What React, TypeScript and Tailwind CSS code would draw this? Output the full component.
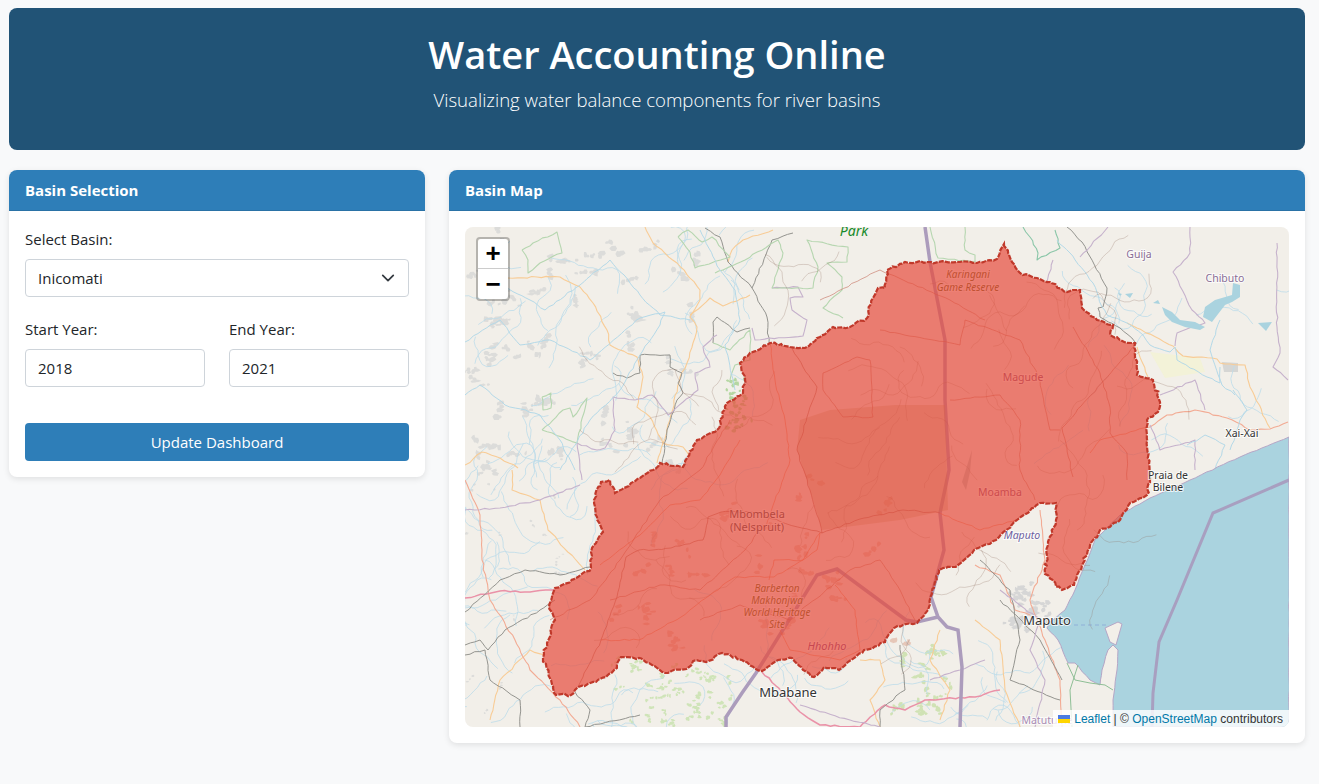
import React from "react";

type P = [number, number];

function rng(seed: number) {
  let a = seed >>> 0;
  return () => {
    a = (a + 0x6d2b79f5) >>> 0;
    let t = a;
    t = Math.imul(t ^ (t >>> 15), t | 1);
    t ^= t + Math.imul(t ^ (t >>> 7), t | 61);
    return ((t ^ (t >>> 14)) >>> 0) / 4294967296;
  };
}

function wig(pts: P[], amp: number, step: number, seed: number, close = false) {
  const r = rng(seed);
  const list = close ? [...pts, pts[0]] : pts;
  let d = `M${list[0][0]} ${list[0][1]}`;
  for (let i = 1; i < list.length; i++) {
    const [x0, y0] = list[i - 1];
    const [x1, y1] = list[i];
    const n = Math.max(1, Math.round(Math.hypot(x1 - x0, y1 - y0) / step));
    for (let k = 1; k <= n; k++) {
      const t = k / n;
      const j = k === n ? 0 : 1;
      const x = x0 + (x1 - x0) * t + j * (r() - 0.5) * 2 * amp;
      const y = y0 + (y1 - y0) * t + j * (r() - 0.5) * 2 * amp;
      d += `L${x.toFixed(1)} ${y.toFixed(1)}`;
    }
  }
  return d + (close ? "Z" : "");
}

const basin: P[] = [
  [1004, 244], [1012, 262], [1020, 273], [1037, 278], [1050, 282], [1067, 292], [1080, 290], [1082, 308],
  [1097, 320], [1113, 325], [1110, 335], [1120, 340], [1135, 343], [1137, 375], [1153, 380], [1160, 402],
  [1158, 412], [1147, 420], [1147, 447], [1150, 478], [1147, 495], [1130, 503], [1118, 522], [1100, 530],
  [1090, 545], [1082, 565], [1074, 585], [1062, 590], [1045, 574], [1048, 545], [1056, 520], [1056, 503],
  [1040, 503], [1017, 520], [996, 540], [974, 550], [958, 565], [939, 570], [928, 610], [917, 623],
  [903, 625], [894, 628], [885, 642], [864, 650], [851, 660], [839, 670], [824, 667], [814, 677],
  [803, 670], [792, 658], [778, 660], [762, 671], [742, 660], [722, 653], [706, 662], [696, 660],
  [689, 667], [665, 673], [649, 663], [639, 658], [621, 657], [614, 670], [596, 682], [578, 687],
  [571, 695], [556, 695], [551, 680], [543, 658], [547, 643], [555, 620], [549, 607], [555, 588],
  [578, 577], [591, 568], [592, 548], [603, 532], [597, 517], [594, 500], [601, 482], [610, 480],
  [615, 493], [631, 483], [653, 470], [660, 463], [683, 467], [697, 440], [717, 430], [727, 403],
  [743, 393], [745, 380], [740, 363], [750, 353], [770, 343], [790, 347], [805, 348], [820, 337],
  [833, 327], [850, 327], [867, 318], [873, 298], [878, 288], [885, 288], [887, 270], [905, 262],
  [927, 262], [960, 262], [977, 263], [997, 259],
];

const sea: P[] = [
  [1289, 437], [1240, 457], [1190, 480], [1150, 498], [1120, 515], [1095, 540], [1085, 565], [1075, 590],
  [1065, 610], [1050, 622], [1047, 628], [1058, 640], [1068, 663], [1075, 663], [1090, 680], [1100, 685],
  [1102, 670], [1108, 650], [1113, 645], [1118, 650], [1117, 670], [1113, 700], [1113, 727], [1289, 727],
];

type L = { c: string; w: number; p: P[] };
const O = "#f8cc96";
const B = "#b4d9e8";
const V = "#c6b2cc";
const G = "#b6d6b0";
const R = "#94948f";
const H = "#f2ab94";
const K = "#ea92a8";

const lines: L[] = [
  { c: O, w: 1.1, p: [[645, 227], [653, 243], [677, 263], [700, 290], [700, 300], [690, 317], [697, 327], [693, 343], [687, 363], [680, 377], [670, 420], [663, 443], [657, 463]] },
  { c: O, w: 1.1, p: [[508, 278], [537, 277], [560, 277], [580, 287], [593, 303], [607, 330], [610, 345], [637, 357], [643, 377], [637, 407], [650, 417], [663, 443], [683, 447], [690, 457]] },
  { c: O, w: 1.1, p: [[690, 315], [710, 298], [723, 306], [750, 295]] },
  { c: O, w: 1.1, p: [[728, 262], [732, 250], [743, 240], [773, 230]] },
  { c: O, w: 1.1, p: [[465, 465], [482, 452], [500, 458], [518, 468]] },
  { c: O, w: 1.1, p: [[1127, 323], [1173, 346], [1183, 356], [1217, 359], [1220, 363], [1245, 365], [1250, 387], [1270, 428]] },
  { c: O, w: 1.1, p: [[1137, 347], [1148, 377]] },
  { c: O, w: 1.1, p: [[512, 470], [512, 490], [540, 500], [548, 530], [585, 570]] },
  { c: O, w: 1.1, p: [[490, 720], [500, 680], [530, 650], [545, 655]] },
  { c: O, w: 1.1, p: [[860, 660], [880, 660], [885, 680], [870, 700], [880, 727]] },
  { c: O, w: 1.1, p: [[940, 630], [930, 660], [950, 690], [940, 720]] },
  { c: O, w: 1.1, p: [[975, 620], [1000, 640], [1005, 690], [1020, 727]] },
  { c: H, w: 1.1, p: [[1150, 427], [1167, 415], [1195, 410], [1227, 418], [1250, 430], [1270, 429], [1288, 422]] },
  { c: H, w: 1.1, p: [[465, 480], [480, 515], [482, 560], [490, 600], [515, 640], [530, 670], [560, 700], [580, 727]] },
  { c: H, w: 1.1, p: [[1040, 510], [1045, 560], [1030, 600], [1045, 640], [1060, 680], [1062, 727]] },
  { c: H, w: 1.1, p: [[975, 565], [1000, 575], [1015, 610], [1030, 615]] },
  { c: K, w: 1.5, p: [[465, 598], [500, 591], [530, 592], [555, 590]] },
  { c: K, w: 1.5, p: [[762, 672], [785, 695], [800, 712], [820, 725], [860, 727]] },
  { c: K, w: 1.5, p: [[860, 727], [885, 705], [905, 710], [925, 700], [975, 697], [1000, 690]] },
  { c: R, w: 1, p: [[705, 228], [720, 237], [728, 262], [752, 288], [767, 317], [769, 343]] },
  { c: R, w: 1, p: [[752, 288], [772, 240], [793, 233]] },
  { c: R, w: 1, p: [[613, 373], [627, 378], [640, 373], [640, 355], [670, 355], [670, 367], [682, 373], [678, 383], [683, 393], [677, 400], [667, 430], [662, 463]] },
  { c: R, w: 1, p: [[713, 343], [713, 322], [717, 317], [737, 332], [750, 328]] },
  { c: R, w: 1, p: [[1067, 227], [1082, 242], [1107, 288], [1103, 307], [1098, 308], [1100, 317], [1120, 328], [1135, 342]] },
  { c: R, w: 1, p: [[465, 645], [480, 640], [488, 650], [505, 630], [540, 610], [555, 600]] },
  { c: R, w: 1, p: [[465, 612], [500, 580], [525, 570], [560, 575], [590, 567]] },
  { c: R, w: 1, p: [[465, 655], [485, 650], [490, 680], [520, 700], [520, 727]] },
  { c: R, w: 1, p: [[575, 692], [590, 710], [585, 727], [640, 715]] },
  { c: R, w: 1, p: [[980, 560], [1010, 590], [1020, 640], [1010, 680], [1060, 700]] },
  { c: R, w: 1, p: [[900, 645], [905, 690], [880, 710], [880, 727]] },
  { c: R, w: 1, p: [[1000, 600], [1040, 640], [1062, 680]] },
  { c: V, w: 1.1, p: [[577, 443], [597, 450], [605, 448], [615, 430], [613, 397], [635, 400], [652, 395], [668, 415], [683, 402], [698, 390], [695, 373], [710, 367], [703, 347], [717, 335]] },
  { c: V, w: 1.1, p: [[577, 443], [582, 480]] },
  { c: V, w: 1.1, p: [[752, 328], [755, 340], [803, 336], [807, 320], [792, 310], [790, 298], [803, 297], [798, 287], [772, 288]] },
  { c: V, w: 1.1, p: [[1108, 227], [1080, 257]] },
  { c: V, w: 1.1, p: [[1053, 260], [1047, 283]] },
  { c: V, w: 1.1, p: [[1190, 227], [1190, 253], [1173, 272], [1192, 310], [1205, 323], [1177, 333], [1175, 346]] },
  { c: V, w: 1.1, p: [[1277, 243], [1277, 327], [1280, 353], [1273, 367], [1288, 380]] },
  { c: V, w: 1.1, p: [[1160, 395], [1195, 380], [1205, 410]] },
  { c: V, w: 1.1, p: [[1150, 425], [1160, 450], [1195, 440], [1195, 470]] },
  { c: V, w: 1.1, p: [[465, 510], [500, 508], [540, 500], [580, 485]] },
  { c: V, w: 1.1, p: [[985, 660], [960, 670], [930, 680]] },
  { c: V, w: 1.1, p: [[1000, 590], [1040, 620], [1030, 650], [1045, 680], [1035, 727]] },
  { c: V, w: 1.1, p: [[800, 705], [850, 720], [880, 727]] },
  { c: "#8ac6a8", w: 1.1, p: [[1023, 227], [1030, 237], [1038, 253], [1037, 260], [1060, 248], [1055, 230]] },
  { c: G, w: 1.1, p: [[522, 250], [533, 243], [557, 232], [562, 253], [540, 263], [528, 273], [528, 260], [522, 250]] },
  { c: G, w: 1.1, p: [[678, 237], [688, 230], [702, 242], [712, 237], [730, 257], [695, 268], [690, 252], [678, 237]] },
  { c: G, w: 1.1, p: [[715, 273], [723, 270], [745, 260], [778, 240], [783, 253], [772, 288], [813, 288], [818, 267], [807, 240], [848, 247], [847, 262], [827, 263], [842, 277], [842, 290], [823, 308], [843, 318]] },
  { c: G, w: 1.1, p: [[542, 397], [551, 393], [551, 408], [543, 410], [542, 397]] },
  { c: G, w: 1.1, p: [[542, 430], [563, 410], [570, 408], [573, 417], [587, 398], [577, 443], [542, 430]] },
  { c: G, w: 1.1, p: [[713, 343], [730, 350], [750, 330], [750, 360], [735, 365], [730, 380]] },
  { c: G, w: 1.1, p: [[930, 227], [938, 258], [975, 262], [975, 255], [965, 250], [965, 227]] },
  { c: B, w: 1, p: [[465, 395], [480, 385], [505, 405], [540, 415], [560, 440], [575, 470]] },
  { c: B, w: 1, p: [[500, 285], [530, 300], [545, 310], [580, 285], [610, 260], [640, 295], [660, 315], [690, 320]] },
  { c: B, w: 1, p: [[465, 342], [500, 320], [520, 345], [550, 340], [590, 360], [640, 318], [665, 312]] },
  { c: B, w: 1, p: [[560, 470], [590, 420], [620, 390], [640, 355], [660, 325], [665, 312]] },
  { c: B, w: 1, p: [[700, 230], [720, 270], [735, 290], [740, 320], [725, 345], [735, 390]] },
  { c: B, w: 1, p: [[1057, 240], [1070, 253], [1093, 283], [1102, 307], [1107, 315], [1127, 323], [1143, 335], [1150, 345], [1170, 352], [1175, 347], [1177, 360], [1207, 377], [1220, 383], [1220, 367]] },
  { c: B, w: 1, p: [[1233, 390], [1247, 410], [1240, 420], [1230, 450]] },
  { c: B, w: 1, p: [[1220, 320], [1210, 350], [1222, 385], [1235, 395]] },
  { c: B, w: 1, p: [[1187, 445], [1205, 435], [1225, 445], [1215, 470]] },
];

const inner: L[] = [
  { c: "#a85a4c", w: 1, p: [[940, 513], [903, 510], [864, 518], [822, 533], [781, 522], [756, 512], [721, 512], [708, 517], [703, 540], [671, 548], [653, 550], [639, 550], [626, 557], [617, 597], [601, 640], [578, 687]] },
  { c: "#f07a55", w: 1, p: [[601, 640], [639, 640], [681, 617], [710, 595], [735, 577], [774, 577], [803, 560], [820, 533], [817, 550], [803, 560], [774, 560], [769, 580]] },
  { c: "#f07a55", w: 1, p: [[940, 513], [980, 530], [1017, 520]] },
  { c: "#f07a55", w: 1, p: [[770, 343], [775, 380], [785, 420], [790, 460], [775, 500], [765, 530]] },
  { c: "#f07a55", w: 1, p: [[600, 565], [640, 535], [670, 505], [700, 500], [720, 475], [740, 440]] },
  { c: "#f07a55", w: 1, p: [[1090, 453], [1100, 440], [1150, 427]] },
  { c: "#f07a55", w: 1, p: [[835, 585], [855, 610], [860, 650], [840, 660], [790, 650], [780, 630]] },
  { c: "#a85a4c", w: 1, p: [[797, 450], [807, 417], [817, 387], [803, 367], [792, 348]] },
  { c: "#a85a4c", w: 1, p: [[797, 450], [810, 490], [822, 533]] },
  { c: "#bf6a5c", w: 1, p: [[823, 373], [857, 357], [870, 360], [873, 417], [843, 417], [823, 390], [823, 373]] },
  { c: "#bf6a5c", w: 1, p: [[1137, 343], [1062, 428], [1073, 477]] },
  { c: "#bf6a5c", w: 1, p: [[1073, 327], [1100, 373], [1110, 407], [1110, 433], [1127, 453], [1127, 480]] },
  { c: "#c4705f", w: 1, p: [[880, 330], [960, 345], [965, 320], [1020, 340], [1040, 380], [1050, 430], [1060, 430]] },
  { c: "#c4705f", w: 1, p: [[950, 400], [1000, 395], [1020, 420], [1020, 470], [1035, 500]] },
  { c: "#c4705f", w: 1, p: [[820, 300], [880, 270], [950, 300], [985, 320]] },
  { c: "#c4705f", w: 1, p: [[610, 600], [660, 585], [700, 590], [745, 550], [760, 530]] },
  { c: "#c4705f", w: 1, p: [[700, 620], [740, 605], [790, 620], [850, 570], [880, 560], [900, 590], [915, 620]] },
  { c: "#c4705f", w: 1, p: [[550, 620], [590, 600], [620, 560], [660, 500], [700, 470], [730, 420]] },
];

function patches(seed: number, n: number, x0: number, x1: number, y0: number, y1: number, s: number, per = 1) {
  const r = rng(seed);
  const out: string[] = [];
  for (let i = 0; i < n; i++) {
    const ccx = x0 + r() * (x1 - x0);
    const ccy = y0 + r() * (y1 - y0);
    const dir = r() * 3.14;
    for (let q = 0; q < per; q++) {
      const off = (r() - 0.5) * s * 5;
      const cx = ccx + Math.cos(dir) * off + (r() - 0.5) * s;
      const cy = ccy + Math.sin(dir) * off + (r() - 0.5) * s;
      const a = s * (0.4 + r() * 0.6);
      const b = s * (0.3 + r() * 0.5);
      const pts: P[] = [];
      for (let k = 0; k < 6; k++) {
        const t = (k / 6) * 6.283;
        const rr = 0.6 + r() * 0.7;
        pts.push([cx + Math.cos(t) * a * rr, cy + Math.sin(t) * b * rr]);
      }
      out.push("M" + pts.map((p) => `${p[0].toFixed(1)} ${p[1].toFixed(1)}`).join("L") + "Z");
    }
  }
  return out.join("");
}

// fine stream network: short wandering lines spread over the land
function streams(seed: number, n: number, x0: number, x1: number, y0: number, y1: number) {
  const r = rng(seed);
  const out: string[] = [];
  for (let i = 0; i < n; i++) {
    let x = x0 + r() * (x1 - x0);
    let y = y0 + r() * (y1 - y0);
    let dir = r() * 6.283;
    let d = `M${x.toFixed(1)} ${y.toFixed(1)}`;
    const len = 8 + Math.floor(r() * 14);
    for (let k = 0; k < len; k++) {
      dir += (r() - 0.5) * 1.3;
      x += Math.cos(dir) * 5;
      y += Math.sin(dir) * 5;
      d += `L${x.toFixed(1)} ${y.toFixed(1)}`;
    }
    out.push(d);
  }
  return out.join("");
}

const grey = patches(11, 50, 465, 700, 232, 470, 4, 7);
const grey2 = patches(23, 14, 465, 560, 470, 720, 2, 3);
const greenA = patches(31, 40, 610, 730, 662, 727, 2.4, 5);
const greenB = patches(37, 18, 885, 950, 640, 712, 3, 6);
const greenC = patches(41, 12, 728, 748, 365, 430, 3, 4);
const shade = patches(47, 30, 610, 910, 480, 650, 4, 6);
const urban = patches(53, 14, 1008, 1045, 590, 630, 4, 5);
const riv = streams(61, 42, 465, 740, 232, 470);
const riv2 = streams(67, 32, 465, 600, 480, 727);
const riv3 = streams(71, 34, 610, 1060, 640, 727);
const riv4 = streams(73, 16, 1060, 1285, 232, 440);
const rivBasin = streams(79, 70, 620, 1130, 280, 650);

function Label({ x, y, children, size = 10.5, fill = "#6f5a7a", italic = false }: { x: number; y: number; children: string; size?: number; fill?: string; italic?: boolean }) {
  return (
    <text
      x={x}
      y={y}
      textAnchor="middle"
      fontFamily="'Noto Sans', sans-serif"
      fontSize={size}
      fontStyle={italic ? "italic" : "normal"}
      fill={fill}
      stroke="#ffffff"
      strokeOpacity={0.75}
      strokeWidth={2}
      paintOrder="stroke"
    >
      {children}
    </text>
  );
}

function BasinMap() {
  return (
    <svg viewBox="465 227 824 500" className="block w-full h-full">
      <rect x={465} y={227} width={824} height={500} fill="#f2efe9" />
      <path d={grey} fill="#dcdcda" />
      <path d={grey2} fill="#dcdcda" />
      <path d={urban} fill="#d6d6d6" />
      <path d={greenA} fill="#cfe4b8" />
      <path d={greenB} fill="#d0e2b4" />
      <path d={greenC} fill="#b5d7a2" />
      <path d="M1150 352L1200 358L1205 372L1165 378Z" fill="#f3f2d8" />
      <path d="M1222 362L1238 363L1238 372L1224 372Z" fill="#d6d6d4" />
      <path d={riv} fill="none" stroke="#bcdcea" strokeWidth={0.8} />
      <path d={riv2} fill="none" stroke="#bcdcea" strokeWidth={0.8} />
      <path d={riv3} fill="none" stroke="#bcdcea" strokeWidth={0.8} />
      <path d={riv4} fill="none" stroke="#bcdcea" strokeWidth={0.8} />
      {lines.map((l, i) => (
        <path key={i} d={wig(l.p, 0.8, 5, i + 100)} fill="none" stroke={l.c} strokeWidth={l.w} strokeLinejoin="round" />
      ))}
      <path d={wig(sea, 0.4, 6, 5, true)} fill="#aad3df" stroke="#b5a6c6" strokeWidth={1} />
      <path d="M1105 628L1118 622L1122 624L1116 645L1110 642Z" fill="#f2efe9" stroke="#b5a6c6" strokeWidth={1} />
      <path d="M1074 625L1108 625" fill="none" stroke="#8fb0d8" strokeWidth={1} strokeDasharray="4 3" />
      <path d="M1114 650L1107 668L1103 684L1108 683L1113 650Z" fill="#f2efe9" />
      <path d="M1067 663L1075 680L1090 683L1105 685L1113 690M1078 665L1070 690L1072 727" fill="none" stroke="#8fbf96" strokeWidth={1} />
      <path d="M1162 307L1172 312L1180 320L1195 322L1205 327L1200 330L1185 327L1172 322L1165 315Z" fill="#aad3df" />
      <path d="M1233 283L1240 285L1240 297L1232 302L1225 305L1215 318L1212 322L1203 317L1205 307L1215 300L1232 295Z" fill="#aad3df" />
      <path d="M1258 323L1272 322L1266 331Z" fill="#aad3df" />
      <path d="M1125 294L1133 293L1130 298ZM1118 293L1122 294L1120 296ZM1153 303L1158 300L1160 304Z" fill="#aad3df" />
      <path d="M1289 480L1213 513L1177 600L1159 642L1153 693L1152 727" fill="none" stroke="#a89fc0" strokeWidth={3} />
      <path
        d="M925 227L930 262L945 340L945 400L949 470L940 513L944 550L931 597L938 617L947 627L958 630L962 667L960 727M938 617L917 622L906 620L837 569L817 575L756 673L742 693L726 717L726 727"
        fill="none"
        stroke="#ac9cbc"
        strokeWidth={3.5}
      />
      <text x={854} y={236} textAnchor="middle" fontFamily="'Noto Sans', sans-serif" fontSize={14} fontStyle="italic" fill="#178a2a">Park</text>
      <path d={shade} fill="#c96b4a" fillOpacity={0.3} />
      <path d="M797 450L800 420L830 410L895 405L945 405L948 510L900 520L822 530L810 490Z" fill="#b5925c" fillOpacity={0.32} />
      <path d={rivBasin} fill="none" stroke="#8f6c60" strokeOpacity={0.35} strokeWidth={0.8} />
      <path d="M962 482L972 450L970 472L966 490Z" fill="#8fa0a0" fillOpacity={0.5} />
      {inner.map((l, i) => (
        <path key={i} d={wig(l.p, 0.8, 5, i + 300)} fill="none" stroke={l.c} strokeOpacity={0.6} strokeWidth={l.w} />
      ))}
      <Label x={968} y={278} size={10} italic fill="#5f5a10">Karingani</Label>
      <Label x={968} y={291} size={10} italic fill="#5f5a10">Game Reserve</Label>
      <Label x={1139} y={258} fill="#8a6d95">Guija</Label>
      <Label x={1225} y={282} fill="#8a6d95">Chibuto</Label>
      <Label x={1023} y={381} fill="#8a4d75">Magude</Label>
      <Label x={1000} y={496} fill="#8a4d75">Moamba</Label>
      <Label x={1022} y={539} italic fill="#6e5fa0">Maputo</Label>
      <Label x={757} y={518} size={11} fill="#404048">Mbombela</Label>
      <Label x={757} y={531} size={11} fill="#404048">(Nelspruit)</Label>
      <Label x={777} y={592} size={10} italic fill="#5a6410">Barberton</Label>
      <Label x={777} y={604} size={10} italic fill="#5a6410">Makhonjwa</Label>
      <Label x={777} y={616} size={10} italic fill="#5a6410">World Heritage</Label>
      <Label x={777} y={628} size={10} italic fill="#5a6410">Site</Label>
      <Label x={827} y={650} size={11} italic fill="#7a3d85">Hhohho</Label>
      <path d={wig(basin, 1.3, 3.5, 7, true)} fill="#e74c3c" fillOpacity={0.7} stroke="#c0392b" strokeWidth={2.2} strokeDasharray="5 1.2" />
      <Label x={788} y={697} size={13} fill="#333333">Mbabane</Label>
      <Label x={1047} y={625} size={13} fill="#333333">Maputo</Label>
      <Label x={1242} y={437} size={10.5} fill="#333333">Xai-Xai</Label>
      <Label x={1168} y={479} size={10.5} fill="#333333">Praia de</Label>
      <Label x={1168} y={491} size={10.5} fill="#333333">Bilene</Label>
      <Label x={1047} y={724} size={10.5} fill="#a98bb3">Matutuíne</Label>
    </svg>
  );
}

function Card({ title, children, className }: { title: string; children: React.ReactNode; className?: string }) {
  return (
    <section className={`bg-white rounded-lg overflow-hidden shadow-[0_2px_6px_rgba(0,0,0,0.1)] ${className ?? ""}`}>
      <h2 className="h-[41px] px-4 flex items-center bg-[#2e7eb8] border-b border-[#2a72a6] text-white text-[15px] font-bold">{title}</h2>
      {children}
    </section>
  );
}

const field = "block w-full h-[38px] px-3 rounded border border-[#ced4da] bg-white text-[15px] text-[#212529]";

export default function App() {
  return (
    <div className="min-h-[784px] bg-[#f8f9fa] pl-[9px] pr-[14px] pt-2 font-['Open_Sans',sans-serif] text-[#212529]">
      <header className="h-[142px] rounded-lg bg-[#215376] text-white text-center pt-[21px]">
        <h1 className="text-[38px] leading-[50px] font-semibold">Water Accounting Online</h1>
        <p className="mt-[5px] text-[18.6px] leading-[32px] font-light">Visualizing water balance components for river basins</p>
      </header>
      <div className="mt-5 flex items-start gap-6">
        <Card title="Basin Selection" className="w-[416px] shrink-0">
          <div className="p-4">
            <label className="block text-[15px] leading-[24px] mb-2 h-[24px]">Select Basin:</label>
            <div className="relative">
              <select className={`${field} appearance-none`} defaultValue="Inicomati">
                <option>Inicomati</option>
              </select>
              <svg viewBox="0 0 16 16" className="absolute right-[14px] top-[12px] w-[14px] h-[14px] pointer-events-none" fill="none" stroke="#343a40" strokeWidth={2} strokeLinecap="round" strokeLinejoin="round">
                <path d="M2 5l6 6 6-6" />
              </svg>
            </div>
            <div className="mt-5 grid grid-cols-2 gap-6">
              <div>
                <label className="block text-[15px] leading-[24px] mb-2 h-[24px]">Start Year:</label>
                <input className={field} defaultValue="2018" />
              </div>
              <div>
                <label className="block text-[15px] leading-[24px] mb-2 h-[24px]">End Year:</label>
                <input className={field} defaultValue="2021" />
              </div>
            </div>
            <button className="mt-9 block w-full h-[38px] rounded bg-[#2e7eb8] text-white text-[15px]">Update Dashboard</button>
          </div>
        </Card>
        <Card title="Basin Map" className="flex-1">
          <div className="p-4">
            <div className="relative h-[500px] rounded-lg overflow-hidden">
              <BasinMap />
              <div className="absolute left-[11px] top-[10px] w-[34px] rounded border-2 border-[rgba(0,0,0,0.25)] bg-clip-padding font-['Liberation_Sans',sans-serif] text-black font-bold">
                <div className="h-[30px] flex items-center justify-center bg-white rounded-t border-b border-[#cccccc] text-[26px]">+</div>
                <div className="h-[30px] flex items-center justify-center bg-white rounded-b text-[26px]">−</div>
              </div>
              <div className="absolute right-0 bottom-0 h-[17px] pl-[5px] pr-[6px] flex items-center bg-[rgba(255,255,255,0.8)] font-['Liberation_Sans',sans-serif] text-[12px] text-[#333333] whitespace-nowrap">
                <svg viewBox="0 0 12 8" className="w-3 h-2 mr-1">
                  <rect width={12} height={4} fill="#4C7BE1" />
                  <rect y={4} width={12} height={4} fill="#FFD500" />
                </svg>
                <span className="text-[#0078a8]">Leaflet</span>
                <span>&nbsp;|&nbsp;©&nbsp;</span>
                <span className="text-[#0078a8]">OpenStreetMap</span>
                <span>&nbsp;contributors</span>
              </div>
            </div>
          </div>
        </Card>
      </div>
    </div>
  );
}
